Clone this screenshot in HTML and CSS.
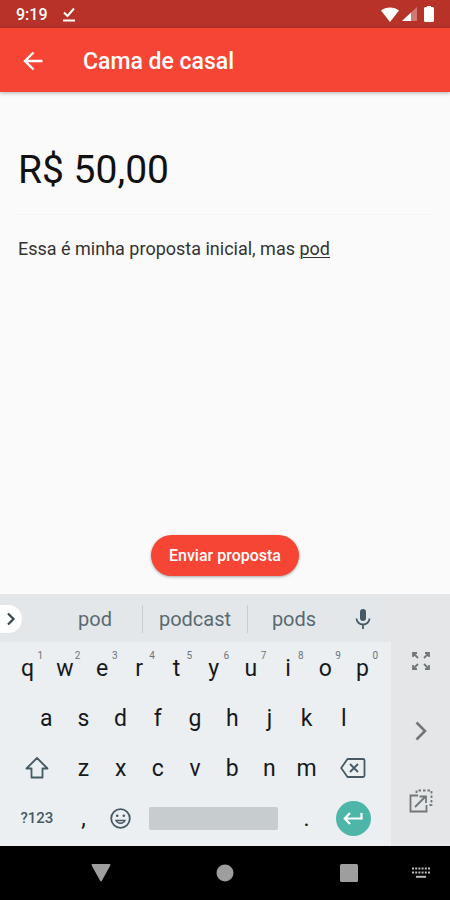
FILE: index.html
```html
<!DOCTYPE html>
<html lang="pt-BR">
<head>
    <meta charset="UTF-8">
    <meta name="viewport" content="width=device-width, initial-scale=1.0">
    <title>Cama de casal</title>
    <link rel="stylesheet" href="styles.css">
</head>
<body>
    <div class="status-bar">
        <span class="clock">9:19</span>
        <svg class="status-check" width="14" height="15" viewBox="0 0 14 15" fill="none" stroke="currentColor" stroke-width="2">
            <path d="M2 5.5l3.5 3.5L12 1.5M1 13.5h12"/>
        </svg>
        <div class="status-icons">
            <svg width="18" height="15" viewBox="0 0 18 15" fill="currentColor">
                <path d="M9 15L0 3.6C2.5 1.5 5.5.5 9 .5s6.500 1 9 3.100z"/>
            </svg>
            <svg width="15" height="14" viewBox="0 0 15 14" fill="currentColor">
                <path d="M15 0v14H0z" opacity=".35"/>
                <path d="M9 5.600V14H0z"/>
            </svg>
            <svg class="battery" width="10" height="16" viewBox="0 0 10 16" fill="currentColor">
                <path d="M3 0h4v1h1.500c.8 0 1.500.7 1.500 1.500v12c0 .8-.7 1.500-1.500 1.500h-7C.7 16 0 15.300 0 14.500v-12C0 1.700.7 1 1.500 1H3z"/>
            </svg>
        </div>
    </div>

    <header class="app-bar">
        <button class="back-btn" type="button" aria-label="Voltar">
            <svg width="20" height="20" viewBox="0 0 20 20" fill="none" stroke="currentColor" stroke-width="2.4">
                <path d="M19.500 10H2M10.500 1.500L2 10l8.500 8.500"/>
            </svg>
        </button>
        <h1>Cama de casal</h1>
    </header>

    <main class="proposal">
        <input class="price" type="text" aria-label="Valor" value="R$ 50,00">
        <div class="message" role="textbox" aria-multiline="true" aria-label="Mensagem" contenteditable="true" spellcheck="false">Essa é minha proposta inicial, mas <u>pod</u></div>
        <button class="send-btn" type="button">Enviar proposta</button>
    </main>

    <section class="keyboard" aria-label="Teclado">
        <div class="keyboard-main">
            <div class="suggestions">
                <button class="expand" type="button" aria-label="Mais opções">
                    <svg width="10" height="14" viewBox="0 0 10 14" fill="none" stroke="currentColor" stroke-width="2.200">
                        <path d="M2 1.500L7.500 7 2 12.500"/>
                    </svg>
                </button>
                <button class="word" type="button">pod</button>
                <button class="word" type="button">podcast</button>
                <button class="word" type="button">pods</button>
                <button class="mic" type="button" aria-label="Ditar">
                    <svg width="16" height="20" viewBox="0 0 16 20">
                        <rect x="5" y="0" width="6" height="12" rx="3" fill="currentColor"/>
                        <path d="M1.500 9.500a6.500 6 0 0 0 13 0M8 15.500V20" fill="none" stroke="currentColor" stroke-width="1.800"/>
                    </svg>
                </button>
            </div>
            <div class="keys">
                <div class="row">
                    <button class="key" type="button">q<sup>1</sup></button>
                    <button class="key" type="button">w<sup>2</sup></button>
                    <button class="key" type="button">e<sup>3</sup></button>
                    <button class="key" type="button">r<sup>4</sup></button>
                    <button class="key" type="button">t<sup>5</sup></button>
                    <button class="key" type="button">y<sup>6</sup></button>
                    <button class="key" type="button">u<sup>7</sup></button>
                    <button class="key" type="button">i<sup>8</sup></button>
                    <button class="key" type="button">o<sup>9</sup></button>
                    <button class="key" type="button">p<sup>0</sup></button>
                </div>
                <div class="row">
                    <span class="half"></span>
                    <button class="key" type="button">a</button>
                    <button class="key" type="button">s</button>
                    <button class="key" type="button">d</button>
                    <button class="key" type="button">f</button>
                    <button class="key" type="button">g</button>
                    <button class="key" type="button">h</button>
                    <button class="key" type="button">j</button>
                    <button class="key" type="button">k</button>
                    <button class="key" type="button">l</button>
                    <span class="half"></span>
                </div>
                <div class="row">
                    <button class="key wide" type="button" aria-label="Maiúsculas">
                        <svg width="24" height="22" viewBox="0 0 24 22" fill="none" stroke="currentColor" stroke-width="1.800" stroke-linejoin="round">
                            <path d="M12 1L1.500 11.500h5V20.500h11V11.500h5z"/>
                        </svg>
                    </button>
                    <button class="key" type="button">z</button>
                    <button class="key" type="button">x</button>
                    <button class="key" type="button">c</button>
                    <button class="key" type="button">v</button>
                    <button class="key" type="button">b</button>
                    <button class="key" type="button">n</button>
                    <button class="key" type="button">m</button>
                    <button class="key wide" type="button" aria-label="Apagar">
                        <svg width="26" height="20" viewBox="0 0 26 20" fill="none" stroke="currentColor" stroke-width="1.800" stroke-linejoin="round">
                            <path d="M7.500 1H23a1.500 1.500 0 0 1 1.500 1.500v15A1.500 1.500 0 0 1 23 19H7.500L1.200 10z"/>
                            <path d="M10 6l8 8M18 6l-8 8"/>
                        </svg>
                    </button>
                </div>
                <div class="row">
                    <button class="key wide symbols" type="button">?123</button>
                    <button class="key" type="button">,</button>
                    <button class="key" type="button" aria-label="Emojis">
                        <svg width="21" height="21" viewBox="0 0 21 21" fill="none" stroke="#455a64" stroke-width="1.800">
                            <circle cx="10.500" cy="10.500" r="9.300"/>
                            <path d="M6 12.500c1.500 3.600 7.500 3.600 9 0z" stroke-width="1.400"/>
                            <circle cx="7.200" cy="7.800" r="1.300" fill="#455a64" stroke="none"/>
                            <circle cx="13.800" cy="7.800" r="1.300" fill="#455a64" stroke="none"/>
                        </svg>
                    </button>
                    <button class="key space" type="button" aria-label="Espaço"><span></span></button>
                    <button class="key" type="button">.</button>
                    <button class="key wide" type="button" aria-label="Enter">
                        <span class="enter">
                            <svg width="20" height="14" viewBox="0 0 20 14" fill="none" stroke="currentColor" stroke-width="2.200">
                                <path d="M18.500 2v5.500H2M7 2L1.800 7.500 7 13"/>
                            </svg>
                        </span>
                    </button>
                </div>
            </div>
        </div>
        <div class="keyboard-side">
            <button type="button" aria-label="Expandir teclado">
                <svg width="20" height="20" viewBox="0 0 20 20" fill="none" stroke="currentColor" stroke-width="1.800">
                    <path d="M6 2H2V6M2 2L7 7M14 2h4V6M18 2l-5 5M6 18H2V14M2 18l5-5M14 18h4V14M18 18l-5-5"/>
                </svg>
            </button>
            <button type="button" aria-label="Mover para a direita">
                <svg width="12" height="20" viewBox="0 0 12 20" fill="none" stroke="currentColor" stroke-width="2.600">
                    <path d="M1.500 1.500L10 10l-8.500 8.500"/>
                </svg>
            </button>
            <button type="button" aria-label="Teclado flutuante">
                <svg width="24" height="24" viewBox="0 0 24 24" fill="none" stroke="currentColor" stroke-width="1.800">
                    <path d="M9 6.500H1.500v16h16V16M6 18L16.500 7.500M10.500 7.500h6.500V14"/>
                    <path d="M7.500 4V1.500H22.500V16H19" stroke-dasharray="2.500 2"/>
                </svg>
            </button>
        </div>
    </section>

    <nav class="nav-bar" aria-label="Sistema">
        <span></span>
        <button type="button" aria-label="Voltar">
            <svg width="20" height="18" viewBox="0 0 20 18" fill="currentColor"><path d="M1.500 0h17c.8 0 1.200.8.8 1.500L10.700 17c-.3.600-1.100.600-1.400 0L.7 1.500C.3.8.7 0 1.500 0z"/></svg>
        </button>
        <button type="button" aria-label="Início">
            <svg width="18" height="18" viewBox="0 0 18 18" fill="currentColor"><circle cx="9" cy="9" r="8.500"/></svg>
        </button>
        <button type="button" aria-label="Recentes">
            <svg width="18" height="18" viewBox="0 0 18 18" fill="currentColor"><rect width="18" height="18" rx="1.500"/></svg>
        </button>
        <button class="ime" type="button" aria-label="Escolher teclado">
            <svg width="20" height="12" viewBox="0 0 20 12" fill="none" stroke="currentColor" stroke-width="2">
                <path d="M1 1.500h18M1 5.500h18" stroke-dasharray="2 1.200"/>
                <path d="M5 9.800h10"/>
            </svg>
        </button>
    </nav>
</body>
</html>
```
FILE: styles.css
```css
* {
    box-sizing: border-box;
}
body {
    margin: 0;
    min-height: 100vh;
    display: flex;
    flex-direction: column;
    background: #fafafa;
    color: #111;
    font-family: Roboto, sans-serif;
}
button {
    display: flex;
    align-items: center;
    justify-content: center;
    margin: 0;
    padding: 0;
    border: none;
    background: none;
    color: inherit;
    font: inherit;
    cursor: pointer;
}
svg {
    display: block;
    flex: none;
}

/* status bar */
.status-bar {
    display: flex;
    align-items: center;
    height: 28px;
    padding: 0 16px;
    background: #b73229;
    color: #fff;
}
.clock {
    font-size: 16px;
    font-weight: 500;
}
.status-check {
    margin-left: 14px;
}
.status-icons {
    display: flex;
    align-items: center;
    gap: 3px;
    margin-left: auto;
}
.battery {
    margin-left: 4px;
}

/* app bar */
.app-bar {
    display: flex;
    align-items: center;
    height: 64px;
    padding: 2px 18px 0;
    background: #f64435;
    color: #fff;
    box-shadow: 0 1px 4px rgba(0, 0, 0, 0.3);
}
.back-btn {
    width: 30px;
    height: 48px;
}
.app-bar h1 {
    margin: 0 0 0 35px;
    font-size: 23px;
    font-weight: 500;
}

/* proposal form */
.proposal {
    flex: 1;
    display: flex;
    flex-direction: column;
    padding: 49px 18px 18px;
}
.price {
    width: 100%;
    height: 74px;
    padding: 0 0 16px;
    border: none;
    border-bottom: 1px solid #f4f4f4;
    outline: none;
    background: none;
    color: #111;
    font-family: inherit;
    font-size: 39px;
}
.message {
    flex: 1;
    padding-top: 22px;
    outline: none;
    color: #333;
    font-size: 18px;
    line-height: 24px;
}
.message u {
    text-decoration-thickness: 1px;
    text-underline-offset: 2px;
}
.send-btn {
    align-self: center;
    height: 41px;
    padding: 0 18px;
    border-radius: 21px;
    background: #f64435;
    color: #fff;
    font-size: 16px;
    font-weight: 500;
    box-shadow: 0 1px 3px rgba(0, 0, 0, 0.35);
}

/* keyboard */
.keyboard {
    display: flex;
    background: #eceff1;
}
.keyboard-main {
    flex: 1;
}
.suggestions {
    display: grid;
    grid-template-columns: 48px 94fr 105fr 93fr 46fr;
    align-items: center;
    height: 48px;
    padding: 2px 5px 0 0;
    background: #e4e7e9;
    color: #455a64;
}
.expand {
    width: 22px;
    height: 28px;
    border-radius: 0 14px 14px 0;
    background: #fff;
    color: #37474f;
}
.word {
    height: 28px;
    color: #5a6a72;
    font-size: 20px;
}
.word + .word {
    border-left: 1px solid #c8cdd0;
}
.keys {
    padding: 1px 10px 3px 9px;
}
.row {
    display: flex;
    height: 50px;
}
.key {
    position: relative;
    flex: 2 1 0;
    color: #16191b;
    font-size: 23px;
}
.key sup {
    position: absolute;
    top: 7px;
    right: 3px;
    color: #6b7579;
    font-size: 10px;
    line-height: 12px;
}
.half {
    flex: 1 1 0;
}
.wide {
    flex-grow: 3;
    color: #455a64;
}
.symbols {
    font-size: 15px;
    font-weight: 500;
}
.space {
    flex-grow: 8;
}
.space span {
    flex: 1;
    height: 23px;
    margin: 0 10px;
    border-radius: 2px;
    background: #c7ccce;
}
.enter {
    display: flex;
    align-items: center;
    justify-content: center;
    width: 35px;
    height: 35px;
    border-radius: 50%;
    background: #4db6a9;
    color: #fff;
}
.keyboard-side {
    display: flex;
    flex-direction: column;
    width: 59px;
    padding: 32px 0 10px;
    background: #e4e6e8;
    color: #70777b;
}
.keyboard-side button {
    flex: 1;
}

/* system navigation */
.nav-bar {
    display: grid;
    grid-template-columns: 39px 1fr 1fr 1fr 39px;
    align-items: center;
    height: 54px;
    background: #000;
    color: #9e9e9e;
}
.nav-bar button {
    height: 48px;
}
.ime {
    justify-content: flex-start;
    color: #bdbdbd;
}
```
